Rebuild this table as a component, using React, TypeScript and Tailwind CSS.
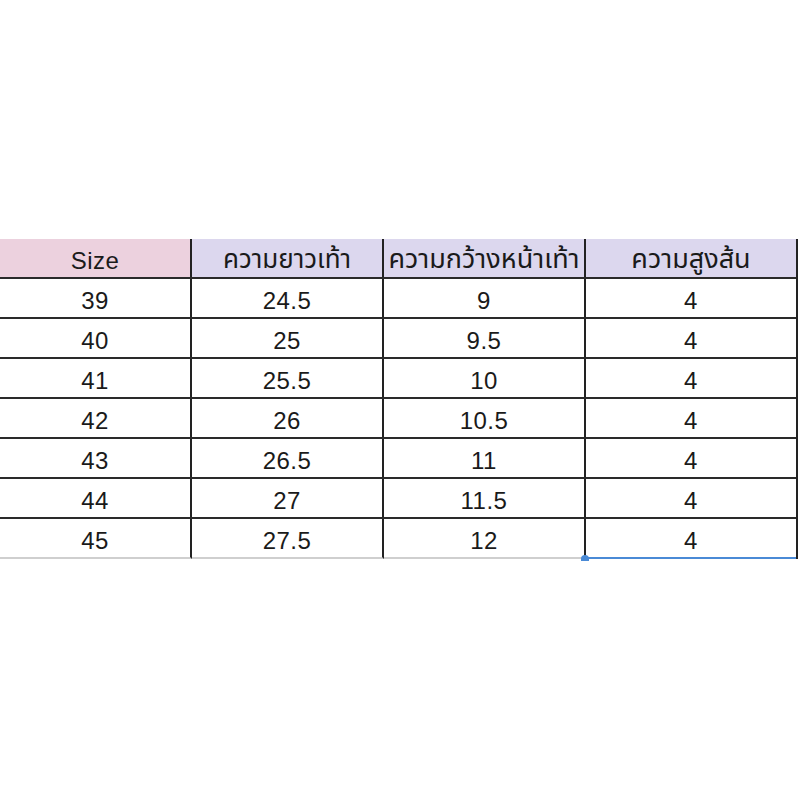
const ROWS: [string, string, string, string][] = [
  ["39", "24.5", "9", "4"],
  ["40", "25", "9.5", "4"],
  ["41", "25.5", "10", "4"],
  ["42", "26", "10.5", "4"],
  ["43", "26.5", "11", "4"],
  ["44", "27", "11.5", "4"],
  ["45", "27.5", "12", "4"],
];

const FONT = { fontFamily: '"Liberation Sans", Arial, "Noto Sans Thai", "Noto Sans", sans-serif' };

export default function App() {
  return (
    <div className="w-[800px] h-[800px] bg-white pt-[239px]" style={FONT}>
      <div className="w-[798px] border-r-2 border-[#222]">
        {/* header */}
        <div className="flex h-[40px] border-b-2 border-[#2a2a2a] text-[#1a1a1a]">
          <div className="w-[192px] bg-[#ecd1de] flex items-center justify-center pt-[6px] border-r-2 border-[#222] text-[24px] tracking-[0.5px]">Size</div>
          <div className="w-[192px] bg-[#dcd7ee] flex items-center justify-center pt-[3px] border-r-2 border-[#222] text-[26px]">ความยาวเท้า</div>
          <div className="w-[202px] bg-[#dcd7ee] flex items-center justify-center pt-[3px] border-r-2 border-[#222] text-[27px] whitespace-nowrap">ความกว้างหน้าเท้า</div>
          <div className="flex-1 bg-[#dcd7ee] flex items-center justify-center pt-[3px] text-[27px]">ความสูงส้น</div>
        </div>
        {ROWS.map((r, i) => {
          const last = i === ROWS.length - 1;
          return (
            <div
              key={r[0]}
              className={
                last
                  ? "flex h-[40px] text-[24px] tracking-[0.5px] text-[#1a1a1a]"
                  : "flex h-[40px] border-b-2 border-[#2a2a2a] text-[24px] tracking-[0.5px] text-[#1a1a1a]"
              }
            >
              <div className={last ? "w-[192px] flex items-center justify-center pt-[6px] border-r-2 border-[#222] border-b-2 border-b-[#cfcfcf]" : "w-[192px] flex items-center justify-center pt-[6px] border-r-2 border-[#222]"}>{r[0]}</div>
              <div className={last ? "w-[192px] flex items-center justify-center pt-[6px] border-r-2 border-[#222] border-b-2 border-b-[#cfcfcf]" : "w-[192px] flex items-center justify-center pt-[6px] border-r-2 border-[#222]"}>{r[1]}</div>
              <div className={last ? "w-[202px] flex items-center justify-center pt-[6px] border-r-2 border-[#222] border-b-2 border-b-[#cfcfcf] relative" : "w-[202px] flex items-center justify-center pt-[6px] border-r-2 border-[#222]"}>
                {r[2]}
                {last && <span className="absolute right-[-5px] bottom-[-4px] w-[8px] h-[6px] rounded-t-full bg-[#4a8ad6]" />}
              </div>
              <div className={last ? "flex-1 flex items-center justify-center pt-[6px] border-b-2 border-b-[#4a8ad6]" : "flex-1 flex items-center justify-center pt-[6px]"}>{r[3]}</div>
            </div>
          );
        })}
      </div>
    </div>
  );
}
